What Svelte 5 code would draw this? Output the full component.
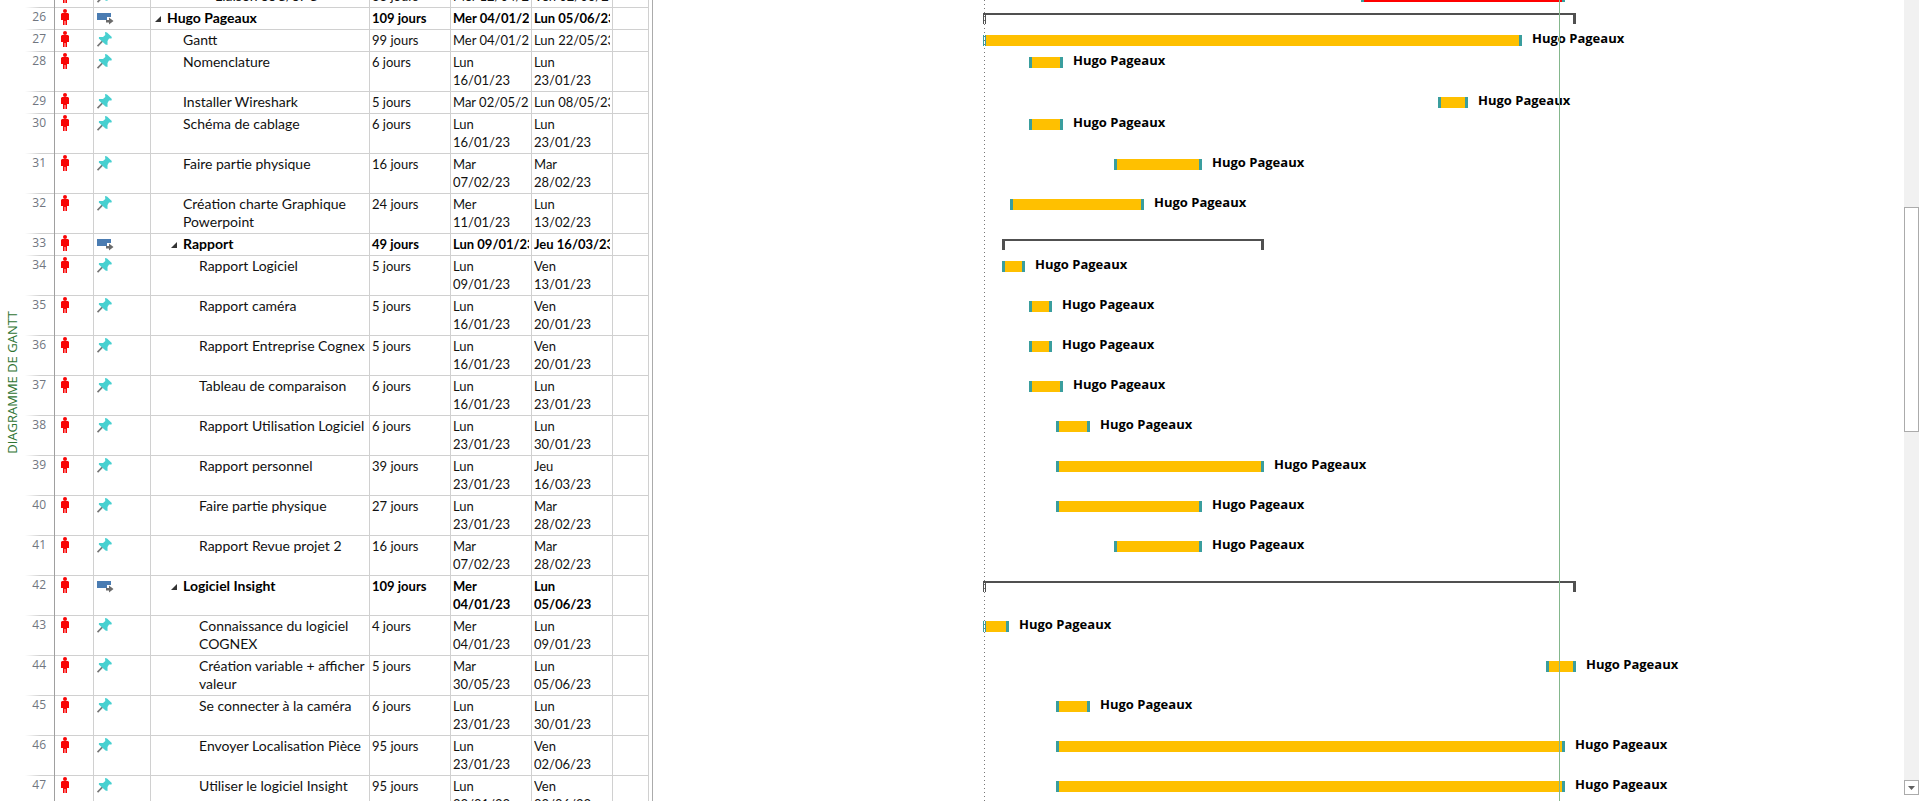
<script>
  const who = 'Hugo Pageaux';
  const rows = [
    { id: 25, level: 3, name: 'Liaison SSC/SPC', dur: '38 jours', from: 'Mer 12/04/23', to: 'Ven 02/06/23', x: 708, w: 204, critical: true },
    { id: 26, level: 0, name: 'Hugo Pageaux', dur: '109 jours', from: 'Mer 04/01/23', to: 'Lun 05/06/23', x: 330, w: 593, summary: true },
    { id: 27, level: 1, name: 'Gantt', dur: '99 jours', from: 'Mer 04/01/23', to: 'Lun 22/05/23', x: 330, w: 539 },
    { id: 28, level: 1, name: 'Nomenclature', dur: '6 jours', from: 'Lun 16/01/23', to: 'Lun 23/01/23', x: 376, w: 34, tall: true },
    { id: 29, level: 1, name: 'Installer Wireshark', dur: '5 jours', from: 'Mar 02/05/23', to: 'Lun 08/05/23', x: 785, w: 30 },
    { id: 30, level: 1, name: 'Schéma de cablage', dur: '6 jours', from: 'Lun 16/01/23', to: 'Lun 23/01/23', x: 376, w: 34, tall: true },
    { id: 31, level: 1, name: 'Faire partie physique', dur: '16 jours', from: 'Mar 07/02/23', to: 'Mar 28/02/23', x: 461, w: 88, tall: true },
    { id: 32, level: 1, name: 'Création charte Graphique Powerpoint', dur: '24 jours', from: 'Mer 11/01/23', to: 'Lun 13/02/23', x: 357, w: 134, tall: true },
    { id: 33, level: 1, name: 'Rapport', dur: '49 jours', from: 'Lun 09/01/23', to: 'Jeu 16/03/23', x: 349, w: 262, summary: true },
    { id: 34, level: 2, name: 'Rapport Logiciel', dur: '5 jours', from: 'Lun 09/01/23', to: 'Ven 13/01/23', x: 349, w: 23, tall: true },
    { id: 35, level: 2, name: 'Rapport caméra', dur: '5 jours', from: 'Lun 16/01/23', to: 'Ven 20/01/23', x: 376, w: 23, tall: true },
    { id: 36, level: 2, name: 'Rapport Entreprise Cognex', dur: '5 jours', from: 'Lun 16/01/23', to: 'Ven 20/01/23', x: 376, w: 23, tall: true },
    { id: 37, level: 2, name: 'Tableau de comparaison', dur: '6 jours', from: 'Lun 16/01/23', to: 'Lun 23/01/23', x: 376, w: 34, tall: true },
    { id: 38, level: 2, name: 'Rapport Utilisation Logiciel', dur: '6 jours', from: 'Lun 23/01/23', to: 'Lun 30/01/23', x: 403, w: 34, tall: true },
    { id: 39, level: 2, name: 'Rapport personnel', dur: '39 jours', from: 'Lun 23/01/23', to: 'Jeu 16/03/23', x: 403, w: 208, tall: true },
    { id: 40, level: 2, name: 'Faire partie physique', dur: '27 jours', from: 'Lun 23/01/23', to: 'Mar 28/02/23', x: 403, w: 146, tall: true },
    { id: 41, level: 2, name: 'Rapport Revue projet 2', dur: '16 jours', from: 'Mar 07/02/23', to: 'Mar 28/02/23', x: 461, w: 88, tall: true },
    { id: 42, level: 1, name: 'Logiciel Insight', dur: '109 jours', from: 'Mer 04/01/23', to: 'Lun 05/06/23', x: 330, w: 593, summary: true, tall: true },
    { id: 43, level: 2, name: 'Connaissance du logiciel COGNEX', dur: '4 jours', from: 'Mer 04/01/23', to: 'Lun 09/01/23', x: 330, w: 26, tall: true },
    { id: 44, level: 2, name: 'Création variable + afficher valeur', dur: '5 jours', from: 'Mar 30/05/23', to: 'Lun 05/06/23', x: 893, w: 30, tall: true },
    { id: 45, level: 2, name: 'Se connecter à la caméra', dur: '6 jours', from: 'Lun 23/01/23', to: 'Lun 30/01/23', x: 403, w: 34, tall: true },
    { id: 46, level: 2, name: 'Envoyer Localisation Pièce', dur: '95 jours', from: 'Lun 23/01/23', to: 'Ven 02/06/23', x: 403, w: 509, tall: true },
    { id: 47, level: 2, name: 'Utiliser le logiciel Insight', dur: '95 jours', from: 'Lun 23/01/23', to: 'Ven 02/06/23', x: 403, w: 509, tall: true }
  ];
  const projectStart = 330;
</script>

<div class="app">
  <aside class="view-name"><span>DIAGRAMME DE GANTT</span></aside>

  <div class="sheet">
    <table>
      <colgroup>
        <col class="c-id" /><col class="c-res" /><col class="c-mode" /><col class="c-name" />
        <col class="c-date" /><col class="c-date" /><col class="c-date" /><col class="c-rest" />
      </colgroup>
      <tbody>
        {#each rows as r (r.id)}
          <tr class:tall={r.tall} class:summary={r.summary}>
            <th scope="row">{r.id}</th>
            <td class="icon res">
              <svg width="8" height="16" viewBox="0 0 8 16" aria-hidden="true">
                <circle cx="4" cy="2" r="2" fill="#f80606" />
                <path d="M1 4h6l1 1v6H6v5H4.400V12h-.8v4H2v-5H0V5z" fill="#f80606" />
              </svg>
            </td>
            <td class="icon mode">
              {#if r.summary}
                <svg width="17" height="12" viewBox="0 0 17 12" aria-hidden="true">
                  <path d="M0 0h14v4h-4v3H0z" fill="#4a7cb2" />
                  <path d="M9 7h3V4.500L16.500 8 12 11.500V9.500H9z" fill="#6b6b6b" />
                </svg>
              {:else}
                <svg width="15" height="15" viewBox="0 0 15 15" aria-hidden="true">
                  <path d="M.5 14.200 6 8.500" stroke="#777" stroke-width="1.800" />
                  <path d="M8 0 10 .5 14.800 5 14.500 6.500 12 6.500 10.500 9 10.500 13 8.500 12.500 1.800 6.500 2 5 6 5 8.300 3z" fill="#48d0d0" />
                </svg>
              {/if}
            </td>
            <td class="name">
              <div class="task level-{r.level}">
                {#if r.summary}
                  <svg class="fold" width="6" height="6" viewBox="0 0 6 6" aria-hidden="true">
                    <path d="M6 0v6H0z" fill="#333" />
                  </svg>
                {/if}
                <span>{r.name}</span>
              </div>
            </td>
            <td>{r.dur}</td>
            <td><div class="date">{r.from}</div></td>
            <td><div class="date">{r.to}</div></td>
            <td></td>
          </tr>
        {/each}
      </tbody>
    </table>
  </div>

  <main class="chart">
    <div class="lines">
      {#each rows as r (r.id)}
        <div class="line" class:tall={r.tall}>
          <div
            class="bar"
            class:bracket={r.summary}
            class:critical={r.critical}
            class:at-start={r.x === projectStart}
            style="margin-left:{r.x}px;width:{r.w}px"
          ></div>
          {#if !r.summary && !r.critical}<span class="label">{who}</span>{/if}
        </div>
      {/each}
    </div>
    <div class="start-line"></div>
    <div class="today-line"></div>
  </main>

  <div class="scroll">
    <div class="track"><div class="thumb"></div></div>
    <button aria-label="Défiler vers le bas">
      <svg width="7" height="4" viewBox="0 0 7 4" aria-hidden="true"><path d="M0 0h7L3.500 4z" fill="#606060" /></svg>
    </button>
  </div>
</div>

<style>
  :global(body) {
    background: #fff;
  }
  .app {
    display: flex;
    height: 100vh;
    overflow: hidden;
    background: #fff;
    color: #111;
    font: 13px/18px Lato, Carlito, Calibri, sans-serif;
  }
  .view-name {
    flex: none;
    box-sizing: border-box;
    width: 25px;
    padding-right: 2px;
    display: flex;
    align-items: center;
    justify-content: center;
    color: #2f7433;
    font: 500 13px/18px 'Open Sans', 'Segoe UI', sans-serif;
  }
  .view-name span {
    writing-mode: vertical-rl;
    transform: rotate(180deg);
    white-space: nowrap;
    margin-bottom: 36px;
  }
  .sheet {
    flex: none;
    width: 627px;
    border-right: 1px solid #ababab;
  }
  table {
    width: 624px;
    margin-top: -14px;
    table-layout: fixed;
    border-collapse: separate;
    border-spacing: 0;
  }
  .c-id { width: 30px; }
  .c-res { width: 39px; }
  .c-mode { width: 57px; }
  .c-name { width: 219px; }
  .c-date { width: 81px; }
  .c-rest { width: 36px; }
  tr { height: 22px; }
  tr.tall { height: 40px; }
  td, th {
    box-sizing: border-box;
    padding: 1px 2px 0;
    vertical-align: top;
    border-right: 1px solid #d0d0d0;
    border-bottom: 1px solid #d0d0d0;
    overflow: hidden;
  }
  th {
    padding: 0 8px 0 0;
    text-align: right;
    border-right-color: #a0a0a0;
    border-bottom: 0;
    background: linear-gradient(90deg, #fff, #d0d0d0 15px) bottom / 100% 1px no-repeat;
    color: #707680;
    font: 12px/18px 'Open Sans', 'Segoe UI', sans-serif;
  }
  td.icon {
    line-height: 0;
  }
  td.res { padding: 1px 0 0 6px; }
  td.mode { padding: 2px 0 0 3px; }
  tr.summary td.mode { padding-top: 5px; }
  tr.summary td { font-weight: 700; color: #000; }
  td.name {
    padding-right: 0;
    font-size: 14px;
  }
  .task {
    display: flex;
    align-items: flex-start;
  }
  .fold {
    flex: none;
    width: 6px;
    margin: 7px 6px 0 -12px;
  }
  .level-0 { padding-left: 14px; }
  .level-1 { padding-left: 30px; }
  .level-2 { padding-left: 46px; }
  .level-3 { padding-left: 62px; }
  .date {
    height: 18px;
    overflow: hidden;
    white-space: nowrap;
  }
  .tall .date {
    height: 36px;
    width: 60px;
    white-space: normal;
  }
  .chart {
    position: relative;
    flex: 1;
    min-width: 0;
    overflow: hidden;
  }
  .lines {
    margin-top: -14px;
  }
  .line {
    display: flex;
    gap: 10px;
    height: 22px;
  }
  .line.tall { height: 40px; }
  .bar {
    box-sizing: border-box;
    flex: none;
    height: 11px;
    margin-top: 5px;
    background: #ffc000;
    border: solid #3a9e9e;
    border-width: 0 3px;
  }
  .bar.critical { background: #f00; }
  .bar.bracket {
    background: none;
    border: solid #505050;
    border-width: 2px 3px 0;
  }
  .bar.at-start {
    border-left-width: 1px;
    background: linear-gradient(90deg, #fff 1px, #3a9e9e 1px 2px, #ffc000 2px);
  }
  .bar.bracket.at-start {
    background: linear-gradient(90deg, #fff 1px, #505050 1px 2px, transparent 2px);
  }
  .label {
    color: #000;
    font: 700 13px/16px 'Open Sans', 'Segoe UI', sans-serif;
    white-space: nowrap;
  }
  .start-line {
    position: absolute;
    top: 0;
    bottom: 0;
    left: 331px;
    width: 1px;
    background: repeating-linear-gradient(#777 0 1px, transparent 1px 4px);
  }
  .today-line {
    position: absolute;
    top: 0;
    bottom: 0;
    left: 906px;
    width: 1px;
    background: #84b78c;
  }
  .scroll {
    flex: none;
    display: flex;
    flex-direction: column;
    box-sizing: border-box;
    width: 16px;
    padding: 0 1px 6px 0;
    background: #fff;
  }
  .track {
    flex: 1;
    background: #f1f1f1;
    padding-top: 207px;
  }
  .thumb {
    box-sizing: border-box;
    height: 225px;
    background: #fff;
    border: 1px solid #ababab;
  }
  .scroll button {
    display: flex;
    align-items: center;
    justify-content: center;
    height: 15px;
    padding: 0;
    border: 1px solid #ababab;
    background: #fff;
  }
</style>
